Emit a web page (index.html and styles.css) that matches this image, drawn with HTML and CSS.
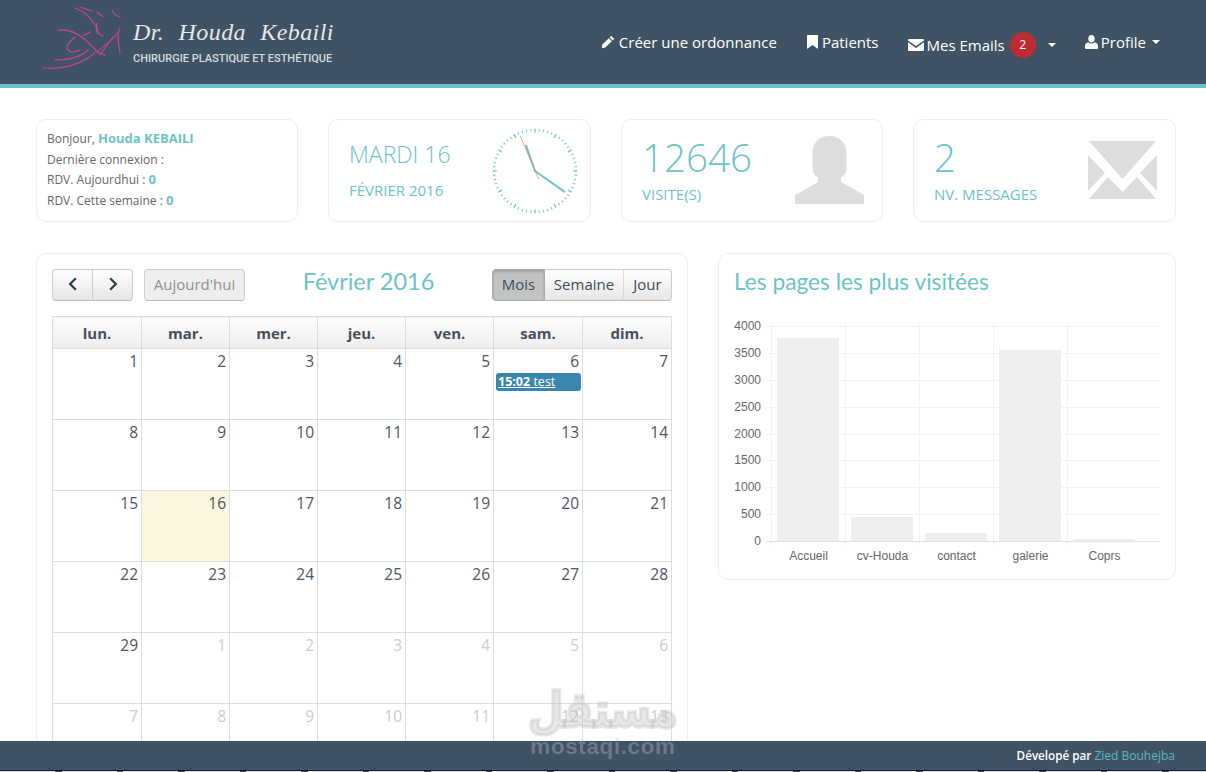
FILE: index.html
```html
<!DOCTYPE html>
<html lang="fr">
<head>
<meta charset="utf-8">
<title>Dr. Houda Kebaili</title>
<link rel="stylesheet" href="styles.css">
</head>
<body>
<header class="topbar">
  <a class="logo">
    <svg class="logo-mark" viewBox="40 4 84 68" aria-hidden="true">
      <g fill="none" stroke="#cf4491" stroke-width="1.100" stroke-linecap="round">
        <path d="M75 8Q86 12 93 22T97 33"/>
        <path d="M80 7L92 11"/>
        <path d="M97 12L103 17"/>
        <path d="M112 10Q113 15 120 17"/>
        <path d="M97 23Q94 33 103 36"/>
        <path d="M90 32Q87 35 83 35"/>
        <path d="M58 30Q72 29 83 38T97 52L105 55"/>
        <path d="M75 37Q64 46 68 50T80 50"/>
        <path d="M55 60Q78 60 88 50"/>
        <path d="M43 68Q70 70 88 58T118 33L120 28"/>
        <path d="M118 33Q118 44 120 53"/>
        <path d="M113 37L100 55"/>
      </g>
    </svg>
    <span class="logo-text">
      <span class="logo-name">Dr. Houda Kebaili</span>
      <span class="logo-tag">CHIRURGIE PLASTIQUE ET ESTHÉTIQUE</span>
    </span>
  </a>
  <nav class="nav">
    <a class="nav-item nav-create">
      <svg class="ico ico-pencil" viewBox="0 0 14 14"><path d="M10.2.8l3 3-1.6 1.6-3-3zM7.8 3.2l3 3L4.4 12.600 .8 13.200l.6-3.600z" fill="#fff"/></svg>Créer une ordonnance</a>
    <a class="nav-item nav-patients">
      <svg class="ico ico-bookmark" viewBox="0 0 11 14"><path d="M0 0h11v14L5.500 10 0 14z" fill="#fff"/></svg>Patients</a>
    <a class="nav-item nav-mail">
      <svg class="ico ico-mail" viewBox="0 0 16 12"><path d="M0 1.500V1q0-1 1-1h14q1 0 1 1v.5L8 7zM0 3.300V11q0 1 1 1h14q1 0 1-1V3.300L8 9z" fill="#fff"/></svg>Mes Emails<span class="badge">2</span><span class="caret caret-mail"></span></a>
    <a class="nav-item nav-profile">
      <svg class="ico ico-user" viewBox="0 0 13 14"><path d="M6.500 0c2 0 3.200 1.500 3.200 3.700S8.300 7.500 6.500 7.500 3.300 5.900 3.300 3.700 4.500 0 6.500 0zM3.400 7.300C4.300 8.200 5.300 8.600 6.500 8.600S8.700 8.200 9.600 7.300C11.600 7.700 13 9 13 11.500V13q0 1-1 1H1q-1 0-1-1v-1.500C0 9 1.400 7.700 3.400 7.300z" fill="#fff"/></svg>Profile<span class="caret"></span></a>
  </nav>
</header>

<main class="page">
  <section class="stats">
    <div class="card card-hello">
      <p>Bonjour, <b>Houda KEBAILI</b></p>
      <p>Dernière connexion :</p>
      <p>RDV. Aujourdhui : <b>0</b></p>
      <p>RDV. Cette semaine : <b>0</b></p>
    </div>
    <div class="card card-stat">
      <div>
        <div class="date-main">MARDI 16</div>
        <div class="date-sub">FÉVRIER 2016</div>
      </div>
      <svg class="clock" viewBox="0 0 90 90" aria-hidden="true">
        <g fill="none" stroke="#6cc4c6">
          <circle class="ticks-min" cx="45" cy="45" r="41" pathLength="60"/>
          <circle class="ticks-hour" cx="45" cy="45" r="40" pathLength="12"/>
        </g>
        <line class="hand" x1="45" y1="45" x2="36" y2="19.600"/>
        <line class="hand hand-min" x1="45" y1="45" x2="74.300" y2="65.600"/>
        <line class="hand-sec" x1="48.600" y1="53" x2="30.300" y2="10.300"/>
      </svg>
    </div>
    <div class="card card-stat">
      <div>
        <div class="stat-num">12646</div>
        <div class="stat-label">VISITE(S)</div>
      </div>
      <svg class="big-ico" viewBox="0 0 69 68" aria-hidden="true">
        <path d="M34.500 0C45 0 51.500 7 51.500 17V32C51.500 37 49 40 46 41V46L69 59V68H0V59L23 46V41C20 40 17.500 37 17.500 32V17C17.500 7 24 0 34.500 0z" fill="#ddd"/>
      </svg>
    </div>
    <div class="card card-stat">
      <div>
        <div class="stat-num">2</div>
        <div class="stat-label">NV. MESSAGES</div>
      </div>
      <svg class="big-ico big-mail" viewBox="0 0 69 58" aria-hidden="true">
        <path d="M1 0H68L34.500 38zM0 14L17 32 0 50zM69 14L52 32 69 50zM20 36L34.500 51 49 36 68 58H1z" fill="#ddd"/>
      </svg>
    </div>
  </section>

  <section class="columns">
    <div class="card panel-cal">
      <div class="toolbar">
        <div class="tb-group">
          <div class="btn-group">
            <button class="btn btn-icon"><svg viewBox="0 0 10 14"><path d="M7.500 2L2.500 7l5 5" fill="none" stroke="#2f3e4e" stroke-width="2"/></svg></button>
            <button class="btn btn-icon"><svg viewBox="0 0 10 14"><path d="M2.500 2l5 5-5 5" fill="none" stroke="#2f3e4e" stroke-width="2"/></svg></button>
          </div>
          <button class="btn btn-today">Aujourd'hui</button>
        </div>
        <h2 class="cal-title">Février 2016</h2>
        <div class="btn-group">
          <button class="btn btn-active btn-mois">Mois</button>
          <button class="btn btn-semaine">Semaine</button>
          <button class="btn btn-jour">Jour</button>
        </div>
      </div>
      <table class="cal">
        <colgroup>
          <col class="col-w"><col class="col-n"><col class="col-n"><col class="col-n"><col class="col-n"><col class="col-w"><col class="col-w">
        </colgroup>
        <thead>
          <tr><th>lun.</th><th>mar.</th><th>mer.</th><th>jeu.</th><th>ven.</th><th>sam.</th><th>dim.</th></tr>
        </thead>
        <tbody>
          <tr><td>1</td><td>2</td><td>3</td><td>4</td><td>5</td><td>6<a class="event"><b>15:02</b> test</a></td><td>7</td></tr>
          <tr><td>8</td><td>9</td><td>10</td><td>11</td><td>12</td><td>13</td><td>14</td></tr>
          <tr><td>15</td><td class="today">16</td><td>17</td><td>18</td><td>19</td><td>20</td><td>21</td></tr>
          <tr><td>22</td><td>23</td><td>24</td><td>25</td><td>26</td><td>27</td><td>28</td></tr>
          <tr><td>29</td><td class="other">1</td><td class="other">2</td><td class="other">3</td><td class="other">4</td><td class="other">5</td><td class="other">6</td></tr>
          <tr><td class="other">7</td><td class="other">8</td><td class="other">9</td><td class="other">10</td><td class="other">11</td><td class="other">12</td><td class="other">13</td></tr>
        </tbody>
      </table>
    </div>

    <div class="card panel-chart">
      <h2 class="chart-title">Les pages les plus visitées</h2>
      <svg class="chart" viewBox="719 320 456 244" aria-label="Graphique">
        <g class="grid">
          <path d="M766 326.500H1160M766 353.500H1160M766 380.500H1160M766 407.500H1160M766 434.500H1160M766 460.500H1160M766 487.500H1160M766 514.500H1160"/>
          <path d="M771.500 323V546M845.500 323V546M919.500 323V546M993.500 323V546M1067.500 323V546"/>
        </g>
        <path class="axis" d="M766 541.500H1160"/>
        <g class="bars">
          <rect x="777" y="338" width="62" height="203"/>
          <rect x="851" y="517" width="62" height="24"/>
          <rect x="925" y="533" width="62" height="8"/>
          <rect x="999" y="350" width="62" height="191"/>
          <rect x="1073" y="539" width="62" height="2"/>
        </g>
        <g class="y-labels">
          <text x="761" y="330">4000</text>
          <text x="761" y="357">3500</text>
          <text x="761" y="384">3000</text>
          <text x="761" y="411">2500</text>
          <text x="761" y="438">2000</text>
          <text x="761" y="464">1500</text>
          <text x="761" y="491">1000</text>
          <text x="761" y="518">500</text>
          <text x="761" y="545">0</text>
        </g>
        <g class="x-labels">
          <text x="808.500" y="560">Accueil</text>
          <text x="882.500" y="560">cv-Houda</text>
          <text x="956.500" y="560">contact</text>
          <text x="1030.500" y="560">galerie</text>
          <text x="1104.500" y="560">Coprs</text>
        </g>
      </svg>
    </div>
  </section>
</main>

<footer class="footer">Dévelopé par&nbsp;<a>Zied Bouhejba</a></footer>
<div class="footer-edge"></div>

<div class="watermark">
  <span class="wm-ar" dir="rtl" lang="ar">مستقل</span>
  <span class="wm-en">mostaqi.com</span>
</div>
</body>
</html>
```

FILE: styles.css
```css
* { box-sizing: border-box; }

html, body {
  margin: 0;
  height: 100%;
  overflow: hidden;
  background: #fff;
  font-family: "Open Sans", sans-serif;
  color: #666;
}

/* Top bar */
.topbar {
  height: 88px;
  background: #3f5364;
  border-bottom: 4px solid #6cc4c6;
  display: flex;
  align-items: flex-start;
  justify-content: space-between;
  padding: 0 46px 0 40px;
}
.logo { display: flex; align-items: flex-start; padding-top: 4px; }
.logo-mark { width: 84px; height: 68px; display: block; flex: none; }
.logo-text { display: flex; flex-direction: column; margin-left: 9px; padding-top: 11px; }
.logo-name {
  font-family: "Liberation Serif", serif;
  font-style: italic;
  font-size: 24px;
  line-height: 34px;
  letter-spacing: .4px;
  word-spacing: 8px;
  color: #e4e7ea;
  white-space: nowrap;
}
.logo-tag {
  font-family: Roboto, sans-serif;
  font-weight: 500;
  font-size: 11px;
  line-height: 14px;
  margin-top: 3px;
  color: #d5dadd;
  white-space: nowrap;
}
.nav { display: flex; align-items: flex-start; padding-top: 31px; color: #fff; font-size: 15px; line-height: 22px; }
.nav-item { display: flex; align-items: center; white-space: nowrap; }
.nav-create { margin-right: 30px; }
.nav-patients { margin-right: 29px; }
.nav-mail { margin-right: 29px; position: relative; top: 1px; }
.ico { display: block; flex: none; }
.ico-pencil { width: 14px; height: 14px; margin-right: 4px; }
.ico-bookmark { width: 11px; height: 14px; margin-right: 4px; }
.ico-mail { width: 16px; height: 12px; margin-right: 3px; }
.ico-user { width: 13px; height: 14px; margin-right: 3px; }
.badge {
  width: 26px;
  height: 26px;
  border-radius: 50%;
  background: #bd2c32;
  color: #fff;
  font-size: 12px;
  line-height: 26px;
  text-align: center;
  margin-left: 5px;
}
.caret {
  width: 0;
  height: 0;
  margin-left: 6px;
  border-top: 4px solid #fff;
  border-left: 4px solid transparent;
  border-right: 4px solid transparent;
}
.caret-mail { margin-left: 12px; }

/* Page */
.page { padding: 31px 30px 0 36px; }
.card {
  background: #fff;
  border: 1px solid #eee;
  border-radius: 10px;
}
.stats {
  display: grid;
  grid-template-columns: 262px 263px 262px 263px;
  gap: 30px;
}
.card-hello {
  height: 103px;
  padding: 9px 10px;
  font-size: 12px;
  line-height: 20.700px;
  color: #666;
}
.card-hello p { margin: 0; height: 20.700px; }
.card-hello b { color: #6cc4c6; font-weight: 700; font-size: 13px; line-height: 1; }
.card-stat {
  height: 103px;
  display: flex;
  align-items: center;
  justify-content: space-between;
  padding: 0 18px 0 20px;
  color: #6cc4c6;
}
.date-main { font-weight: 300; font-size: 23px; line-height: 30px; margin-top: -2px; }
.date-sub { font-size: 15px; line-height: 20px; margin-top: 11px; }
.stat-num { font-weight: 300; font-size: 38.500px; line-height: 46px; margin-top: -4px; }
.stat-label { font-size: 15px; line-height: 20px; margin-top: 4px; }

.clock { width: 90px; height: 90px; display: block; margin-right: -8px; }
.ticks-min { stroke-width: 2.500; stroke-dasharray: .25 .75; stroke-dashoffset: .125; opacity: .9; }
.ticks-hour { stroke-width: 4; stroke-dasharray: .05 .95; stroke-dashoffset: .025; }
.hand { stroke: #6cc4c6; stroke-width: 2; stroke-linecap: round; }
.hand-sec { stroke: #e0965a; stroke-width: .8; }
.big-ico { width: 69px; height: 68px; display: block; margin-top: -2px; }
.big-mail { height: 58px; }

.columns {
  display: grid;
  grid-template-columns: 652fr 458fr;
  gap: 30px;
  margin-top: 31px;
  align-items: start;
}

/* Calendar */
.panel-cal { padding: 15px; }
.toolbar {
  display: flex;
  justify-content: space-between;
  align-items: flex-start;
  height: 32px;
  margin-bottom: 15px;
}
.tb-group { display: flex; gap: 11px; }
.btn-group { display: flex; }
.btn {
  height: 32px;
  padding: 0 0 2px;
  font: 15px/28px "Open Sans", sans-serif;
  color: #3d4a5a;
  background: linear-gradient(#fff, #e6e6e6);
  border: 1px solid #ccc;
  border-bottom-color: #bbb;
  border-radius: 0;
  display: block;
}
.btn-group .btn + .btn { border-left: 0; }
.btn-group .btn:first-child { border-radius: 4px 0 0 4px; }
.btn-group .btn:last-child { border-radius: 0 4px 4px 0; }
.btn-icon { width: 41px; display: flex; align-items: center; justify-content: center; }
.btn-icon + .btn-icon { width: 40px; }
.btn-icon svg { width: 12px; height: 16px; display: block; }
.btn-today {
  width: 101px;
  background: #eee;
  color: #8f8f8f;
  border-radius: 4px;
}
.btn-active {
  background: #c2c4c4;
  box-shadow: inset 0 2px 3px rgba(0,0,0,.18);
  border-color: #aaa;
}
.btn-mois { width: 53px; }
.btn-semaine { width: 79px; border-right-color: #d8d8d8; }
.btn-jour { width: 48px; }
.cal-title {
  margin: 0;
  font: 400 23.500px/24px Lato, sans-serif;
  color: #6cc4c6;
}
.cal {
  width: 620px;
  table-layout: fixed;
  border-collapse: collapse;
}
.col-w { width: 89px; }
.col-n { width: 88px; }
.cal th, .cal td { border: 1px solid #ddd; }
.cal th {
  height: 32px;
  padding: 0;
  font-size: 15px;
  line-height: 28px;
  font-weight: 700;
  color: #46505c;
  background: linear-gradient(#fcfcfc, #eee);
}
.cal td {
  height: 71px;
  padding: 1px 3px 0 2px;
  vertical-align: top;
  text-align: right;
  font-size: 15.500px;
  line-height: 23px;
  color: #4a5766;
}
.cal td.other { color: #ccc; }
.cal td.today { background: #fcf6e0; }
.event {
  display: block;
  margin: 0 -2px 0 0;
  height: 18px;
  padding-left: 2px;
  border-radius: 3px;
  background: #3a87ad;
  color: #fff;
  font-size: 12.500px;
  line-height: 17px;
  text-align: left;
  text-decoration: underline;
}

/* Chart */
.panel-chart { padding: 15px; height: 327px; }
.chart-title {
  margin: 0 0 25px;
  font: 400 22.700px/26px Lato, sans-serif;
  color: #6cc4c6;
}
.chart {
  display: block;
  width: 456px;
  height: 244px;
  margin: 0 -15px;
  font-family: "Liberation Sans", sans-serif;
  font-size: 12px;
}
.grid path { fill: none; stroke: #f2f2f2; stroke-width: 1; }
.axis { fill: none; stroke: #e0e0e0; stroke-width: 1; }
.bars rect { fill: #eee; }
.y-labels text { fill: #666; text-anchor: end; }
.x-labels text { fill: #666; text-anchor: middle; }

/* Footer */
.footer {
  position: fixed;
  left: 0;
  right: 0;
  bottom: 1px;
  height: 30px;
  background: #3f5364;
  border-bottom: 1px solid #15191d;
  color: #fff;
  font-size: 11.700px;
  font-weight: 600;
  line-height: 29px;
  padding-right: 31px;
  display: flex;
  justify-content: flex-end;
}
.footer a { color: #5db8c0; font-weight: 400; font-size: 12px; }
.footer-edge {
  position: fixed;
  left: 0;
  right: 0;
  bottom: 0;
  height: 1px;
  background: repeating-linear-gradient(90deg, #e4e4e4 0 55px, #444 55px 61.500px);
}

/* Watermark */
.watermark {
  position: fixed;
  left: 528px;
  top: 684px;
  width: 150px;
  display: flex;
  flex-direction: column;
  align-items: center;
  pointer-events: none;
  color: rgba(190,190,190,.36);
}
.wm-ar {
  font: 700 41px/52px "DejaVu Sans", sans-serif;
  -webkit-text-stroke: 3px rgba(190,190,190,.36);
  transform: scaleY(1.2);
}
.wm-en { font: 700 22.500px/22px "Liberation Sans", sans-serif; letter-spacing: .6px; }
```
